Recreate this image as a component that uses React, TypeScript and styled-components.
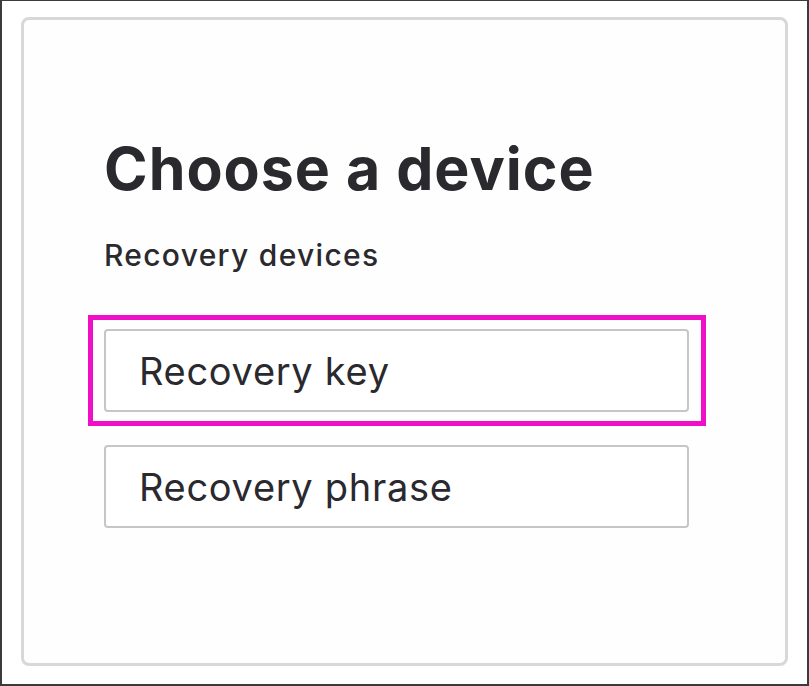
import React from 'react';
import styled, { createGlobalStyle, css } from 'styled-components';

const GlobalStyle = createGlobalStyle`
  html, body {
    margin: 0;
    padding: 0;
    background: #ffffff;
  }

  * {
    box-sizing: border-box;
  }
`;

const Frame = styled.div`
  width: 809px;
  height: 686px;
  display: flex;
  border: 2px solid #3b3b3d;
  border-top-width: 1px;
  padding: 16px 19px 18px 19px;
  background: #ffffff;
  font-family: Inter, 'Liberation Sans', sans-serif;
  color: #2a292e;
`;

const Card = styled.section`
  flex: 1;
  display: flex;
  flex-direction: column;
  border: 3px solid #d8d8d8;
  border-radius: 8px;
  background: #fefefe;
  padding: 119px 96px 0 80px;
`;

const Title = styled.h1`
  margin: 0;
  font-size: 59px;
  line-height: 1;
  font-weight: 700;
  letter-spacing: 1px;
`;

const Subtitle = styled.h2`
  margin: 42px 0 0;
  font-size: 30px;
  line-height: 1;
  font-weight: 500;
  letter-spacing: 1.3px;
`;

const DeviceList = styled.div`
  display: flex;
  flex-direction: column;
  gap: 33px;
  margin-top: 59px;
`;

interface DeviceButtonProps {
  $focused?: boolean;
}

const DeviceButton = styled.button<DeviceButtonProps>`
  position: relative;
  display: flex;
  align-items: center;
  width: 100%;
  height: 83px;
  padding: 0 0 0 33px;
  border: 2px solid #c6c6c6;
  border-radius: 4px;
  background: #ffffff;
  color: #2a292e;
  font-family: inherit;
  font-size: 38px;
  line-height: 1;
  font-weight: 400;
  letter-spacing: 0.7px;
  text-align: left;
  outline: none;
  cursor: pointer;

  ${p =>
    p.$focused &&
    css`
      &::after {
        content: '';
        position: absolute;
        top: -16px;
        right: -19px;
        bottom: -16px;
        left: -18px;
        border: 5px solid #ee0fc6;
        pointer-events: none;
      }
    `}
`;

const devices = [
  { id: 'key', label: 'Recovery key' },
  { id: 'phrase', label: 'Recovery phrase' }
];

export default function App() {
  return (
    <>
      <GlobalStyle />
      <Frame>
        <Card>
          <Title>Choose a device</Title>
          <Subtitle>Recovery devices</Subtitle>
          <DeviceList>
            {devices.map((d, i) => (
              <DeviceButton key={d.id} $focused={i === 0}>
                {d.label}
              </DeviceButton>
            ))}
          </DeviceList>
        </Card>
      </Frame>
    </>
  );
}
